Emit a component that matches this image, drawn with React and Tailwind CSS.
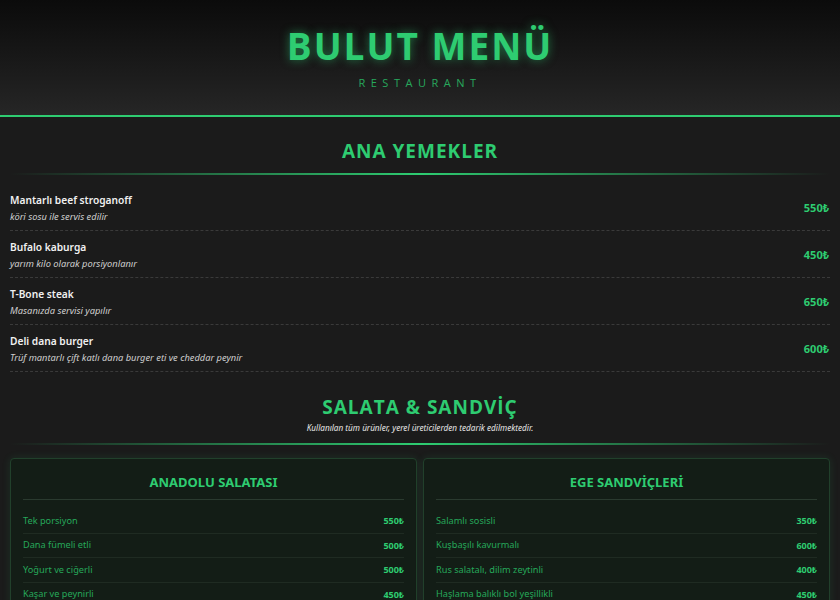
const mainDishes = [
  { name: 'Mantarlı beef stroganoff', desc: 'köri sosu ile servis edilir', price: '550₺' },
  { name: 'Bufalo kaburga', desc: 'yarım kilo olarak porsiyonlanır', price: '450₺' },
  { name: 'T-Bone steak', desc: 'Masanızda servisi yapılır', price: '650₺' },
  { name: 'Deli dana burger', desc: 'Trüf mantarlı çift katlı dana burger eti ve cheddar peynir', price: '600₺' },
];

const cards = [
  {
    title: 'ANADOLU SALATASI',
    items: [
      ['Tek porsiyon', '550₺'],
      ['Dana fümeli etli', '500₺'],
      ['Yoğurt ve ciğerli', '500₺'],
      ['Kaşar ve peynirli', '450₺'],
    ],
  },
  {
    title: 'EGE SANDVİÇLERİ',
    items: [
      ['Salamlı sosisli', '350₺'],
      ['Kuşbaşılı kavurmalı', '600₺'],
      ['Rus salatalı, dilim zeytinli', '400₺'],
      ['Haşlama balıklı bol yeşillikli', '450₺'],
    ],
  },
];

const SectionLine = () => (
  <div className="mx-[10px] h-[2px] bg-gradient-to-r from-transparent via-[#2ecc71] to-transparent" />
);

export default function App() {
  return (
    <div className="min-h-[600px] bg-[#1b1b1b] font-['Noto_Sans','Open_Sans',sans-serif] text-white">
      {/* Header */}
      <header className="h-[117px] bg-gradient-to-b from-[#0b0b0b] to-[#262626] border-b-2 border-[#2ecc71] flex flex-col items-center pt-[24px]">
        <h1 className="font-['Open_Sans',sans-serif] text-[37px] leading-[44px] font-bold tracking-[2px] text-[#2ecc71] [text-shadow:0_0_10px_rgba(46,204,113,0.55)]">
          BULUT MENÜ
        </h1>
        <p className="mt-[8px] text-[11px] leading-[14px] tracking-[5.5px] text-[#27a85c] font-['Open_Sans',sans-serif]">
          RESTAURANT
        </p>
      </header>

      {/* Ana yemekler */}
      <section className="pt-[20px]">
        <h2 className="text-center text-[19px] leading-[28px] font-bold tracking-[1px] text-[#2ecc71] font-['Open_Sans',sans-serif]">
          ANA YEMEKLER
        </h2>
        <div className="mt-[8px] mb-[9px]">
          <SectionLine />
        </div>
        <div className="px-[10px]">
          {mainDishes.map((d) => (
            <div
              key={d.name}
              className="flex items-center justify-between border-b border-dashed border-[#3a3a3a] h-[47px] pt-[2px]"
            >
              <div>
                <div className="text-[10.2px] leading-[16px] font-semibold text-[#f0f0f0]">{d.name}</div>
                <div className="text-[9.3px] leading-[14px] italic text-[#cfcfcf] mt-[2px]">{d.desc}</div>
              </div>
              <div className="text-[11px] font-bold text-[#2ecc71] pr-[1px]">{d.price}</div>
            </div>
          ))}
        </div>
      </section>

      {/* Salata & sandviç */}
      <section className="pt-[21px]">
        <h2 className="text-center text-[19px] leading-[28px] font-bold tracking-[1px] text-[#2ecc71] font-['Open_Sans',sans-serif]">
          SALATA &amp; SANDVİÇ
        </h2>
        <p className="text-center text-[8.2px] leading-[12px] italic text-[#e8e8e8] mt-[1px]">
          Kullanılan tüm ürünler, yerel üreticilerden tedarik edilmektedir.
        </p>
        <div className="mt-[9px]">
          <SectionLine />
        </div>
        <div className="grid grid-cols-2 gap-[6px] px-[10px] mt-[13px]">
          {cards.map((c) => (
            <div
              key={c.title}
              className="rounded-[4px] border border-[#21402b] bg-[#131d16] px-[12px] pt-[13px] shadow-[0_0_8px_rgba(46,204,113,0.12)]"
            >
              <h3 className="text-center text-[13px] leading-[20px] font-bold text-[#2ecc71] pb-[7px] border-b border-[#2a3a2f]">
                {c.title}
              </h3>
              <div className="pt-[9px]">
                {c.items.map(([name, price]) => (
                  <div
                    key={name}
                    className="flex items-center justify-between h-[24.5px] border-b border-[#1f2b22] text-[9px]"
                  >
                    <span className="text-[#26a85a] text-[9.2px]">{name}</span>
                    <span className="font-bold text-[#2ecc71]">{price}</span>
                  </div>
                ))}
              </div>
            </div>
          ))}
        </div>
        <div className="h-[20px]" />
      </section>
    </div>
  );
}
